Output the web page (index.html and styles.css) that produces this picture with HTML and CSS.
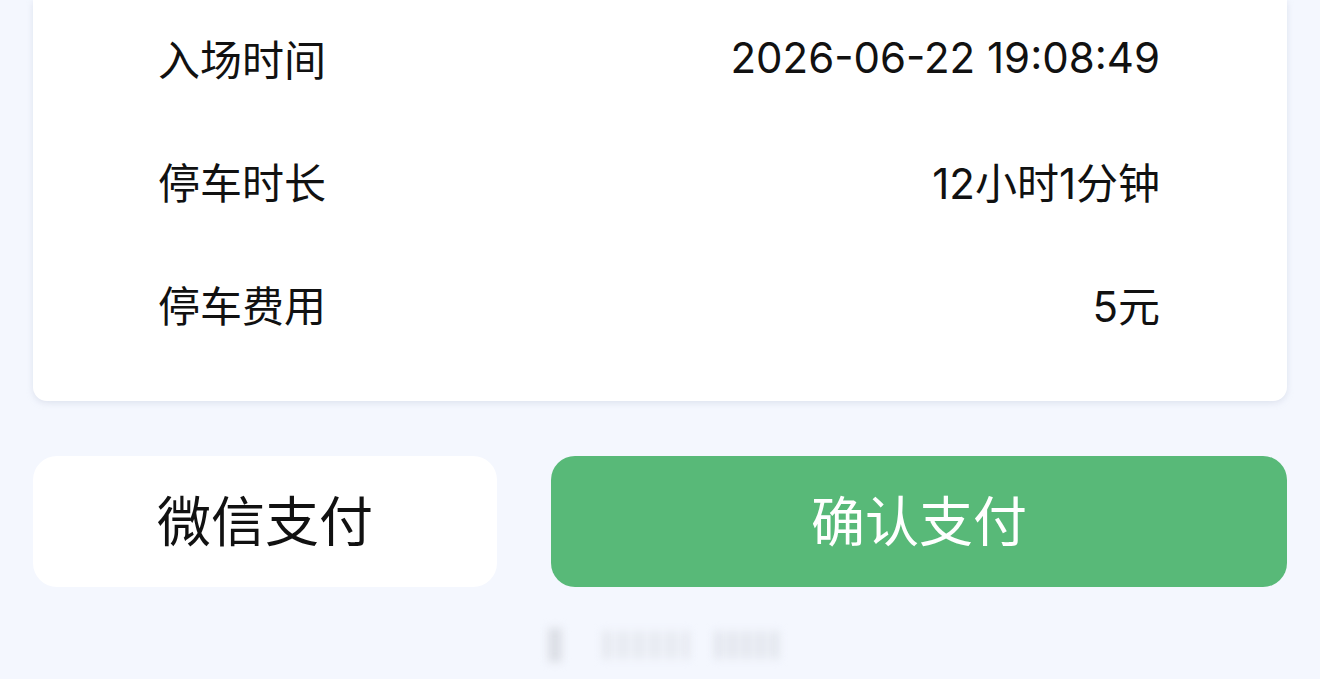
FILE: index.html
```html
<!DOCTYPE html>
<html lang="zh-CN">
<head>
<meta charset="utf-8">
<link rel="stylesheet" href="styles.css">
</head>
<body>
<div class="page">
  <div class="card">
    <div class="row"><span class="label">入场时间</span><span class="value">2026-06-22 19:08:49</span></div>
    <div class="row"><span class="label">停车时长</span><span class="value">12小时1分钟</span></div>
    <div class="row"><span class="label">停车费用</span><span class="value">5元</span></div>
  </div>
  <div class="actions">
    <button class="btn btn-wechat">微信支付</button>
    <button class="btn btn-confirm">确认支付</button>
  </div>
  <div class="watermark">
    <span class="wm wm-a"></span>
    <span class="wm wm-b"></span>
    <span class="wm wm-c"></span>
  </div>
</div>
</body>
</html>
```

FILE: styles.css
```css
html, body {
  margin: 0;
  padding: 0;
  background: #f4f7fe;
  font-family: "Noto Sans CJK SC", "Noto Sans", sans-serif;
  color: #111;
}
.page {
  width: 1320px;
  height: 679px;
  overflow: hidden;
}
.card {
  margin: 0 33px;
  background: #fff;
  border-radius: 0 0 14px 14px;
  box-shadow: 0 2px 6px rgba(180, 190, 210, 0.35);
  padding: 0 127px 32px 125px;
}
.row {
  box-sizing: border-box;
  height: 123px;
  padding-bottom: 8px;
  display: flex;
  align-items: center;
  justify-content: space-between;
  font-size: 42px;
}
.value {
  font-family: "Inter", "Noto Sans CJK SC", sans-serif;
  font-size: 42px;
}
.actions {
  display: flex;
  gap: 54px;
  margin: 55px 33px 0;
}
.btn {
  box-sizing: border-box;
  height: 131px;
  border: none;
  border-radius: 24px;
  font-family: "Noto Sans CJK SC", "Noto Sans", sans-serif;
  font-size: 54px;
  padding: 0 0 6px;
}
.btn-wechat {
  width: 464px;
  background: #fff;
  color: #111;
}
.btn-confirm {
  flex: 1;
  background: #58b978;
  color: #fff;
}
.watermark {
  display: flex;
  align-items: center;
  margin: 40px 0 0 548px;
  height: 36px;
}
.wm {
  display: block;
  height: 34px;
  filter: blur(4px);
}
.wm-a {
  width: 14px;
  background: #dcdfe6;
  border-radius: 2px;
}
.wm-b {
  width: 88px;
  margin-left: 40px;
  height: 28px;
  background: repeating-linear-gradient(90deg, #e6e9f0 0 10px, #f1f4fb 10px 16px);
}
.wm-c {
  width: 66px;
  margin-left: 24px;
  height: 28px;
  background: repeating-linear-gradient(90deg, #e3e6ee 0 9px, #f0f3fa 9px 14px);
}
```
